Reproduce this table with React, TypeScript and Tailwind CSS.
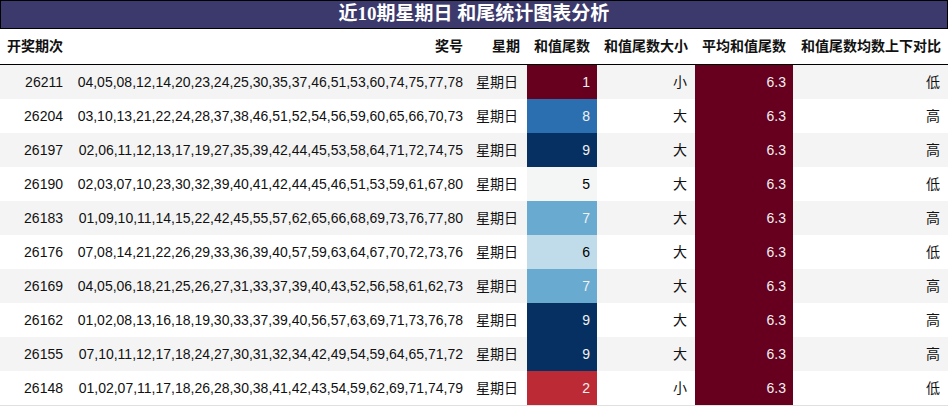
import React from "react";

type Row = { id: string; nums: string; tail: number; size: string; cmp: string };

const rows: Row[] = [
  { id: "26211", nums: "04,05,08,12,14,20,23,24,25,30,35,37,46,51,53,60,74,75,77,78", tail: 1, size: "小", cmp: "低" },
  { id: "26204", nums: "03,10,13,21,22,24,28,37,38,46,51,52,54,56,59,60,65,66,70,73", tail: 8, size: "大", cmp: "高" },
  { id: "26197", nums: "02,06,11,12,13,17,19,27,35,39,42,44,45,53,58,64,71,72,74,75", tail: 9, size: "大", cmp: "高" },
  { id: "26190", nums: "02,03,07,10,23,30,32,39,40,41,42,44,45,46,51,53,59,61,67,80", tail: 5, size: "大", cmp: "低" },
  { id: "26183", nums: "01,09,10,11,14,15,22,42,45,55,57,62,65,66,68,69,73,76,77,80", tail: 7, size: "大", cmp: "高" },
  { id: "26176", nums: "07,08,14,21,22,26,29,33,36,39,40,57,59,63,64,67,70,72,73,76", tail: 6, size: "大", cmp: "低" },
  { id: "26169", nums: "04,05,06,18,21,25,26,27,31,33,37,39,40,43,52,56,58,61,62,73", tail: 7, size: "大", cmp: "高" },
  { id: "26162", nums: "01,02,08,13,16,18,19,30,33,37,39,40,56,57,63,69,71,73,76,78", tail: 9, size: "大", cmp: "高" },
  { id: "26155", nums: "07,10,11,12,17,18,24,27,30,31,32,34,42,49,54,59,64,65,71,72", tail: 9, size: "大", cmp: "高" },
  { id: "26148", nums: "01,02,07,11,17,18,26,28,30,38,41,42,43,54,59,62,69,71,74,79", tail: 2, size: "小", cmp: "低" },
];

const tailClass: Record<number, string> = {
  1: "bg-[#67001f] text-[#f1f1f1]",
  2: "bg-[#bc2a35] text-[#f1f1f1]",
  5: "bg-[#f4f6f6] text-[#000000]",
  6: "bg-[#c0dcea] text-[#000000]",
  7: "bg-[#68aad0] text-[#f1f1f1]",
  8: "bg-[#2b6fb0] text-[#f1f1f1]",
  9: "bg-[#053061] text-[#f1f1f1]",
};

const grid = "grid grid-cols-[70px_400px_57px_70px_98px_98px_155px]";

export default function App() {
  return (
    <div
      className="w-[948px] h-[406px] bg-white text-[14px] text-[#111]"
      style={{ fontFamily: '"Liberation Sans", "Noto Sans CJK SC", sans-serif' }}
    >
      <div
        className="h-[29px] bg-[#3c3a6c] border border-black flex items-center justify-center text-white font-bold text-[19px]"
        style={{ fontFamily: '"Liberation Serif", "Noto Sans CJK SC", serif' }}
      >
        近10期星期日 和尾统计图表分析
      </div>
      <div className={`${grid} h-[36px] border-b border-black font-bold`}>
        {["开奖期次", "奖号", "星期", "和值尾数", "和值尾数大小", "平均和值尾数", "和值尾数均数上下对比"].map((h) => (
          <div key={h} className="flex items-center justify-end pr-[7px] whitespace-nowrap">
            {h}
          </div>
        ))}
      </div>
      <div className="border-b border-[#e0e0e0]">
        {rows.map((r, i) => (
          <div key={r.id} className={`${grid} h-[34px] ${i % 2 === 0 ? "bg-[#f4f4f4]" : "bg-white"}`}>
            <div className="flex items-center justify-end pr-[7px]">{r.id}</div>
            <div className="flex items-center justify-end pr-[7px] whitespace-nowrap">{r.nums}</div>
            <div className="flex items-center justify-end pr-[9px]">星期日</div>
            <div className={`flex items-center justify-end pr-[7px] ${tailClass[r.tail]}`}>{r.tail}</div>
            <div className="flex items-center justify-end pr-[8px]">{r.size}</div>
            <div className="flex items-center justify-end pr-[7px] bg-[#67001f] text-[#f1f1f1]">6.3</div>
            <div className="flex items-center justify-end pr-[8px]">{r.cmp}</div>
          </div>
        ))}
      </div>
    </div>
  );
}
